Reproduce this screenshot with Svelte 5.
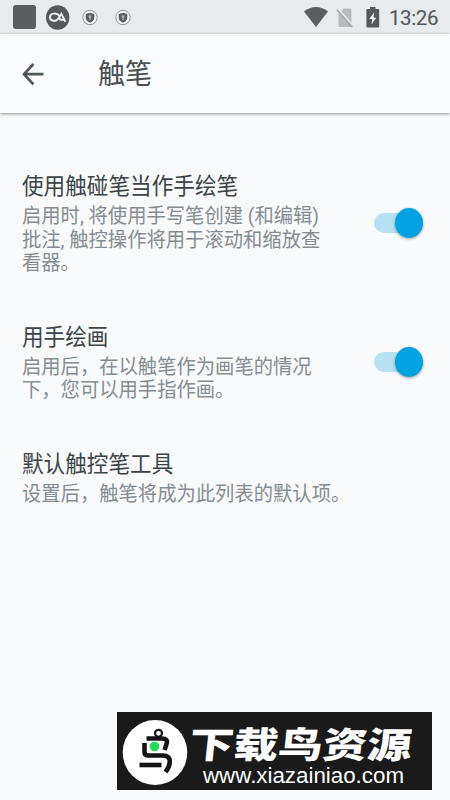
<script>
  const settings = [
    { title: '使用触碰笔当作手绘笔', lines: ['启用时, 将使用手写笔创建 (和编辑)', '批注, 触控操作将用于滚动和缩放查', '看器。'], on: true },
    { title: '用手绘画', lines: ['启用后，在以触笔作为画笔的情况', '下，您可以用手指作画。'], on: true },
    { title: '默认触控笔工具', lines: ['设置后，触笔将成为此列表的默认项。'] }
  ];
</script>

{#snippet shield()}
  <svg class="shield" width="16" height="17" viewBox="0 0 16 17">
    <circle cx="8" cy="8.5" r="7.2" fill="#f4f6f7" stroke="#85888a" stroke-width=".9" />
    <path d="M8 3.7 12.3 5v3.5c0 2.5-1.8 4.2-4.3 5.3-2.5-1.1-4.3-2.8-4.3-5.3V5z" fill="#5b5e60" />
    <path d="M8 5.8v5.2M6.5 6.8 8 8.5l1.5-1.7" fill="none" stroke="#c6caca" stroke-width="1" />
  </svg>
{/snippet}

<div class="screen">
  <div class="status">
    <span class="square"></span>
    <svg class="badge" width="24" height="25" viewBox="0 0 24 25">
      <ellipse cx="11.7" cy="12.5" rx="11.7" ry="12.2" fill="#56595b" />
      <path d="M13.2 10.8C11 7.4 4 7.9 4 12.3c0 4.2 6 4.7 8.2 1.4l3.2-4.7 4 7.7M12.4 11.4l2 3.3h3.9" fill="none" stroke="#e9edef" stroke-width="2" />
    </svg>
    {@render shield()}
    {@render shield()}
    <svg class="wifi" width="24" height="21" viewBox="0 0 24 21">
      <path d="M0 4.5C7-1.5 17-1.5 24 4.5L12 20z" fill="#5b5e60" />
    </svg>
    <svg class="sim" width="18" height="21" viewBox="0 0 18 21">
      <path d="M7.5 1.5H14q1.5 0 1.5 1.5v15.5q0 1.5-1.5 1.5H4q-1.5 0-1.5-1.5V7z" fill="#b8bbbd" />
      <path d="m1.8 1.4 15.5 18" stroke="#e7ebed" stroke-width="2" />
      <path d="m.8 2.7 15.5 17.4" stroke="#a6aaac" stroke-width="1.5" />
    </svg>
    <svg class="battery" width="14" height="21" viewBox="0 0 14 21">
      <path d="M4 0h5.5v2H12q1.2 0 1.2 1.2v16Q13.2 20.5 12 20.5H1.6Q.4 20.5.4 19.2v-16Q.4 2 1.6 2H4z" fill="#56595b" />
      <path d="M8.2 5.5 3.3 12h2.9l-.7 5.5 4.8-6.8H7.5z" fill="#f3f5f6" />
    </svg>
    <span class="time">13:26</span>
  </div>

  <header>
    <svg width="24" height="24" viewBox="0 0 24 24" fill="none" stroke="#50575b" stroke-width="2.7">
      <path d="M22.5 12.2H3.2M12.4 2 3 12.2l9.4 10.2" />
    </svg>
    <h1>触笔</h1>
  </header>

  <main>
    {#each settings as item}
      <section>
        <div class="copy">
          <h2>{item.title}</h2>
          {#each item.lines as line}<p>{line}</p>{/each}
        </div>
        {#if item.on}
          <div class="switch" role="switch" aria-checked="true" aria-label={item.title}><span class="thumb"></span></div>
        {/if}
      </section>
    {/each}
  </main>

  <div class="banner">
    <svg width="315" height="78" viewBox="0 0 315 78">
      <ellipse cx="38" cy="40.5" rx="32.3" ry="32.5" fill="#fff" />
      <g fill="none" stroke="#151515" stroke-width="4.6">
        <circle cx="41.5" cy="21.3" r="3.5" stroke-width="2.2" />
        <path d="M29.5 26.5h15.5q6.5 0 4.5 5.5L47.5 38" />
        <path d="M27.5 31v9q0 3.5 4 3.5h14q8 0 7.2 7-.4 5-4.2 9.5" />
        <path d="M22.5 53H44.5" />
      </g>
      <circle cx="37.5" cy="34.5" r="4.8" fill="#24d957" />
      <text class="brand" transform="translate(71 46) skewX(-6) scale(1.25 1)" textLength="178" lengthAdjust="spacingAndGlyphs">下载鸟资源</text>
      <text class="url" x="86" y="70.5" textLength="201" lengthAdjust="spacingAndGlyphs">www.xiazainiao.com</text>
    </svg>
  </div>
</div>

<style>
  :global(body) { margin: 0; }
  .screen {
    position: relative;
    width: 450px;
    height: 800px;
    overflow: hidden;
    background: #f8fafc;
    font-family: Roboto, "Noto Sans CJK SC", sans-serif;
  }
  .status {
    display: flex;
    align-items: center;
    height: 34px;
    background: #e7ebee;
  }
  .square {
    width: 23px;
    height: 24px;
    margin: 0 10px 0 13px;
    border-radius: 3px;
    background: #5b5e60;
  }
  .badge { margin-right: 12px; }
  .shield { margin-right: 17px; }
  .wifi { margin-left: auto; margin-right: 8px; }
  .sim { margin-right: 12px; }
  .battery { margin-right: 9px; }
  .time {
    width: 61px;
    font-size: 20.5px;
    line-height: 34px;
    letter-spacing: -.4px;
    color: #56595b;
    -webkit-text-stroke: .15px #56595b;
    padding-top: 2px;
    box-sizing: border-box;
  }
  header {
    display: flex;
    align-items: center;
    height: 79px;
    padding-left: 21px;
    background: #f9fbfd;
    box-shadow: 0 1px 3px rgba(0, 0, 0, .42);
  }
  h1, h2, p {
    margin: 0;
    font-weight: 400;
    white-space: nowrap;
    transform-origin: left center;
  }
  h1 {
    margin: 3px 0 0 53px;
    font-size: 28.5px;
    line-height: 40px;
    color: #485054;
    transform: scaleX(.947);
  }
  main { padding: 61px 27px 0 22px; }
  section {
    display: flex;
    justify-content: space-between;
    align-items: center;
    margin-bottom: 48.7px;
  }
  .copy { width: 310px; }
  h2 {
    height: 31px;
    font-size: 23px;
    line-height: 26px;
    color: #3c4448;
    transform: scaleX(.94);
  }
  p {
    height: 23.7px;
    font-size: 20.5px;
    line-height: 23.7px;
    color: #858d92;
    transform: scaleX(.942);
  }
  .switch {
    position: relative;
    top: -2px;
    width: 49px;
    height: 20px;
    border-radius: 10px;
    background: #b6e2f4;
  }
  .thumb {
    position: absolute;
    right: 0;
    top: -5px;
    width: 28px;
    height: 30px;
    border-radius: 50%;
    background: #05a2e1;
    box-shadow: 0 1px 3px rgba(0, 0, 0, .4);
  }
  .banner {
    position: absolute;
    left: 117px;
    top: 712px;
    width: 315px;
    height: 78px;
    background: #1a1a1a;
  }
  .banner svg { display: block; }
  .brand {
    fill: #fff;
    font: 900 36px "Noto Sans CJK SC", sans-serif;
  }
  .url {
    fill: #fff;
    font: 22px "Liberation Sans", Arial, sans-serif;
  }
</style>
